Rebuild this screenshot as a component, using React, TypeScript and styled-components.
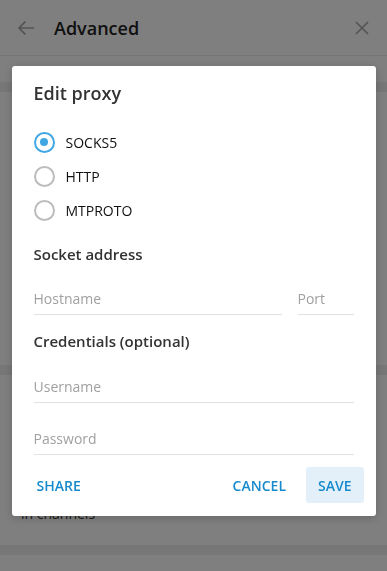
import styled, { createGlobalStyle } from 'styled-components';

const GlobalStyle = createGlobalStyle`
  * {
    box-sizing: border-box;
  }
  body {
    margin: 0;
    font-family: 'Open Sans', 'Noto Sans', sans-serif;
    background: #ffffff;
  }
`;

const Page = styled.main`
  width: 387px;
  height: 571px;
  overflow: hidden;
  background: #ffffff;
  display: flex;
  flex-direction: column;
`;

const Header = styled.header`
  height: 56px;
  flex-shrink: 0;
  display: flex;
  align-items: center;
  padding: 0 18px;
  border-bottom: 1px solid #e8e8e8;

  .title {
    flex: 1;
    margin-left: 20px;
    font-size: 18px;
    font-weight: 600;
    color: #222222;
  }
  svg {
    display: block;
  }
`;

const Section = styled.section<{ $height: number }>`
  height: ${(props) => props.$height}px;
  flex-shrink: 0;
  display: flex;
  flex-direction: column;
  justify-content: flex-end;
  padding: 0 21px 21px;
  font-size: 14px;
  line-height: 20px;
  color: #333333;
`;

const Divider = styled.div`
  height: 10px;
  flex-shrink: 0;
  background: #efefef;
`;

const Overlay = styled.div`
  position: fixed;
  inset: 0;
  background: rgba(0, 0, 0, 0.5);
  display: flex;
  justify-content: center;
  align-items: flex-start;
  padding-top: 66px;
`;

const Dialog = styled.article`
  width: 364px;
  background: #ffffff;
  border-radius: 3px;
  box-shadow: 0 2px 10px rgba(0, 0, 0, 0.2);
  display: flex;
  flex-direction: column;
`;

const Body = styled.div`
  padding: 15px 22px 0;
  display: flex;
  flex-direction: column;
`;

const Title = styled.h2`
  margin: 0;
  font-size: 18px;
  line-height: 24px;
  font-weight: 600;
  color: #333333;
`;

const RadioList = styled.div`
  margin-top: 20px;
  display: flex;
  flex-direction: column;
`;

const RadioRow = styled.label`
  height: 34px;
  display: flex;
  align-items: center;
  gap: 11px;
  font-size: 14px;
  color: #111111;
  cursor: pointer;
`;

const RadioMark = styled.span<{ $checked?: boolean }>`
  position: relative;
  width: 21px;
  height: 21px;
  border-radius: 50%;
  border: 2px solid ${(props) => (props.$checked ? '#40a7e3' : '#bcbcbc')};

  &::after {
    content: '';
    display: ${(props) => (props.$checked ? 'block' : 'none')};
    position: absolute;
    top: 4.5px;
    left: 4.5px;
    width: 8px;
    height: 8px;
    border-radius: 50%;
    background: #40a7e3;
  }
`;

const SubTitle = styled.h3<{ $gap: number }>`
  margin: ${(props) => props.$gap}px 0 0;
  font-size: 15px;
  line-height: 22px;
  font-weight: 600;
  color: #333333;
`;

const FieldRow = styled.div<{ $gap: number }>`
  margin-top: ${(props) => props.$gap}px;
  display: flex;
  gap: 16px;
`;

const Field = styled.div<{ $width?: number }>`
  flex: ${(props) => (props.$width ? `0 0 ${props.$width}px` : '1')};
  padding-bottom: 5px;
  border-bottom: 1px solid #e1e1e1;
  font-size: 14px;
  line-height: 20px;
  color: #a0a0a0;
`;

const Actions = styled.div`
  margin-top: 12px;
  padding: 0 12px 13px 13px;
  display: flex;
  align-items: center;
  gap: 8px;

  .spacer {
    flex: 1;
  }
`;

const Button = styled.button<{ $active?: boolean }>`
  height: 36px;
  padding: 0 12px;
  border: none;
  border-radius: 3px;
  background: ${(props) => (props.$active ? '#e3f0fa' : 'transparent')};
  color: #168acd;
  font-family: 'Open Sans', 'Noto Sans', sans-serif;
  font-size: 14px;
  font-weight: 600;
  text-transform: uppercase;
  cursor: pointer;
`;

const protocols = ['SOCKS5', 'HTTP', 'MTPROTO'];

function App() {
  return (
    <>
      <GlobalStyle />
      <Page>
        <Header>
          <svg width="16" height="14" viewBox="0 0 16 14" fill="none">
            <path
              d="M1 7h15M7.5 0.5L1 7l6.5 6.5"
              stroke="#a8a8a8"
              strokeWidth="1.7"
            />
          </svg>
          <span className="title">Advanced</span>
          <svg width="14" height="14" viewBox="0 0 14 14" fill="none">
            <path d="M1 1l12 12M13 1L1 13" stroke="#a8a8a8" strokeWidth="1.7" />
          </svg>
        </Header>
        <Section $height={26} />
        <Divider />
        <Section $height={273} />
        <Divider />
        <Section $height={170}>
          <span>in channels</span>
        </Section>
        <Divider />
        <Section $height={20} />
      </Page>
      <Overlay>
        <Dialog>
          <Body>
            <Title>Edit proxy</Title>
            <RadioList>
              {protocols.map((p, i) => (
                <RadioRow key={p}>
                  <RadioMark $checked={i === 0} />
                  {p}
                </RadioRow>
              ))}
            </RadioList>
            <SubTitle $gap={16}>Socket address</SubTitle>
            <FieldRow $gap={24}>
              <Field>Hostname</Field>
              <Field $width={56}>Port</Field>
            </FieldRow>
            <SubTitle $gap={15}>Credentials (optional)</SubTitle>
            <FieldRow $gap={25}>
              <Field>Username</Field>
            </FieldRow>
            <FieldRow $gap={26}>
              <Field>Password</Field>
            </FieldRow>
          </Body>
          <Actions>
            <Button>Share</Button>
            <span className="spacer" />
            <Button>Cancel</Button>
            <Button $active>Save</Button>
          </Actions>
        </Dialog>
      </Overlay>
    </>
  );
}

export default App;
